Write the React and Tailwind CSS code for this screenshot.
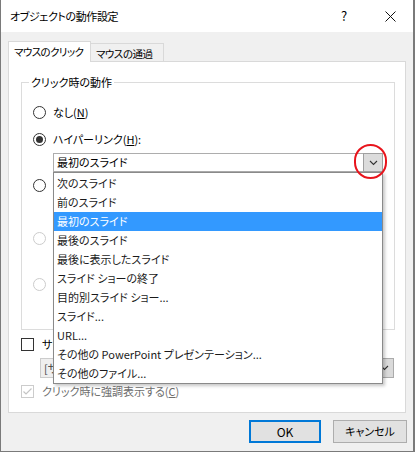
import { useState } from "react";

const listItems = [
  "次のスライド",
  "前のスライド",
  "最初のスライド",
  "最後のスライド",
  "最後に表示したスライド",
  "スライド ショーの終了",
  "目的別スライド ショー...",
  "スライド...",
  "URL...",
  "その他の PowerPoint プレゼンテーション...",
  "その他のファイル...",
];

const Radio = ({ checked, disabled }) => {
  return (
    <span
      className={`flex h-[13px] w-[13px] shrink-0 items-center justify-center rounded-full border bg-white ${
        disabled ? "border-[#cccccc]" : "border-[#333333]"
      }`}
    >
      {checked && <span className="h-[7px] w-[7px] rounded-full bg-[#333333]" />}
    </span>
  );
};

const Checkbox = ({ checked, disabled }) => {
  return (
    <span
      className={`flex h-[13px] w-[13px] shrink-0 items-center justify-center border bg-white ${
        disabled ? "border-[#cccccc]" : "border-[#333333]"
      }`}
    >
      {checked && (
        <svg width="11" height="11" viewBox="0 0 11 11">
          <polyline
            points="1.5,5.5 4,8 9.5,2.5"
            fill="none"
            stroke={disabled ? "#c4c4c4" : "#333333"}
            strokeWidth="1.2"
          />
        </svg>
      )}
    </span>
  );
};

const Chevron = () => (
  <svg width="9" height="6" viewBox="0 0 9 6">
    <polyline points="1,1 4.5,4.5 8,1" fill="none" stroke="#333333" strokeWidth="1.1" />
  </svg>
);

export default function App() {
  const [selected] = useState(2);

  return (
    <div className="relative h-[452px] w-[415px] overflow-hidden border-b border-l border-r-2 border-[#7a7a7a] bg-[#f0f0f0] font-['Noto_Sans_CJK_JP','Noto_Sans',sans-serif] text-[11px] text-black [font-feature-settings:'palt']">
      {/* title bar */}
      <div className="flex h-[32px] items-center bg-white pl-[9px]">
        <div className="whitespace-nowrap text-[11px] leading-none tracking-[-0.4px]">オブジェクトの動作設定</div>
        <div className="ml-auto flex h-full">
          <div className="flex h-full w-[46px] items-center justify-center text-[13px]">?</div>
          <div className="flex h-full w-[46px] items-center justify-center">
            <svg width="11" height="11" viewBox="0 0 11 11">
              <path d="M0.5 0.5 L10.5 10.5 M10.5 0.5 L0.5 10.5" stroke="#111" strokeWidth="1" />
            </svg>
          </div>
        </div>
      </div>

      <div className="pl-[7px] pt-[9px]">
        {/* tabs */}
        <div className="flex h-[20px] items-start">
          <div className="relative z-10 flex h-[21px] w-[83px] items-center whitespace-nowrap border-l border-r border-t border-[#d9d9d9] bg-white pl-[5px] text-[10.5px] tracking-[-0.6px]">
            マウスのクリック
          </div>
          <div className="mt-[2px] flex h-[18px] w-[73px] items-center whitespace-nowrap border-r border-t border-[#d9d9d9] bg-[#f0f0f0] pl-[5px] pt-[2px] text-[10.5px] tracking-[-0.5px]">
            マウスの通過
          </div>
        </div>

        {/* panel */}
        <div className="h-[352px] w-[398px] border border-[#d9d9d9] bg-white">
          <div className="relative ml-[12px] mt-[20px] h-[248px] w-[374px] border border-[#dcdcdc]">
            <div className="absolute left-[7px] top-[-10px] whitespace-nowrap bg-white px-[2px] leading-[18px]">
              クリック時の動作
            </div>

            <div className="ml-[11px] mt-[19px] flex h-[20px] items-center gap-[7px]">
              <Radio />
              <span>
                なし(<span className="underline">N</span>)
              </span>
            </div>
            <div className="ml-[11px] mt-[7px] flex h-[20px] items-center gap-[7px]">
              <Radio checked />
              <span>
                ハイパーリンク(<span className="underline">H</span>):
              </span>
            </div>

            {/* hyperlink combobox with open list */}
            <div className="relative ml-[31px] mt-[4px] h-[19px] w-[330px]">
              <div className="flex h-full items-center border border-[#adadad] bg-white">
                <span className="flex-1 pl-[3px]">最初のスライド</span>
                <span className="-mr-px flex h-[19px] w-[20px] items-center justify-center border border-[#a0a0a0] bg-[#dcdcdc]">
                  <Chevron />
                </span>
              </div>

              <div className="absolute left-0 top-full z-20 w-[330px] border border-[#8a8a8a] bg-white pt-[1px] shadow-[2px_2px_3px_rgba(0,0,0,0.22)]">
                {listItems.map((item, i) => (
                  <div
                    key={item}
                    className={`flex h-[19px] items-center whitespace-nowrap pl-[3px] ${
                      i === selected ? "bg-[#3399ff] text-white" : "text-[#1a1a1a]"
                    }`}
                  >
                    {item}
                  </div>
                ))}
              </div>

              <div className="absolute left-[301px] top-[-9px] z-30 h-[35px] w-[33px] rounded-full border-2 border-[#e8141c]" />
            </div>

            {/* rows hidden under the open list: only the radios show */}
            <div className="ml-[11px] mt-[3px] flex h-[20px] items-center">
              <Radio />
            </div>
            <div className="ml-[31px] mt-[5px] h-[20px] w-[330px] border border-[#adadad] bg-white" />

            <div className="ml-[11px] mt-[8px] flex h-[20px] items-center">
              <Radio disabled />
            </div>
            <div className="ml-[31px] mt-[4px] h-[20px] w-[330px] border border-[#cccccc] bg-[#f0f0f0]" />

            <div className="ml-[11px] mt-[2px] flex h-[20px] items-center">
              <Radio disabled />
            </div>
            <div className="ml-[31px] mt-[4px] h-[20px] w-[330px] border border-[#cccccc] bg-[#f0f0f0]" />
          </div>

          <div className="ml-[12px] mt-[4px] flex h-[20px] items-center gap-[8px]">
            <Checkbox />
            <span className="whitespace-nowrap">
              サウンドの再生(<span className="underline">P</span>):
            </span>
          </div>
          <div className="ml-[31px] mt-[4px] flex h-[20px] w-[354px] items-center border border-[#cccccc] bg-[#efefef]">
            <span className="flex-1 whitespace-nowrap pl-[3px] text-[#444444]">[サウンドなし]</span>
            <span className="-mr-px flex h-[20px] w-[20px] items-center justify-center border border-[#ababab] bg-[#dadada]">
              <Chevron />
            </span>
          </div>

          <div className="ml-[12px] mt-[3px] flex h-[20px] items-center gap-[8px] text-[#6d6d6d]">
            <Checkbox checked disabled />
            <span className="whitespace-nowrap">
              クリック時に強調表示する(<span className="underline">C</span>)
            </span>
          </div>
        </div>

        {/* buttons */}
        <div className="mt-[7px] flex justify-end gap-[12px] pr-[6px]">
          <button className="flex h-[23px] w-[72px] items-center justify-center border-2 border-[#0078d7] bg-[#e1e1e1] text-[12px]">
            OK
          </button>
          <button className="flex h-[23px] w-[74px] items-center justify-center border border-[#adadad] bg-[#e1e1e1]">
            キャンセル
          </button>
        </div>
      </div>
    </div>
  );
}
